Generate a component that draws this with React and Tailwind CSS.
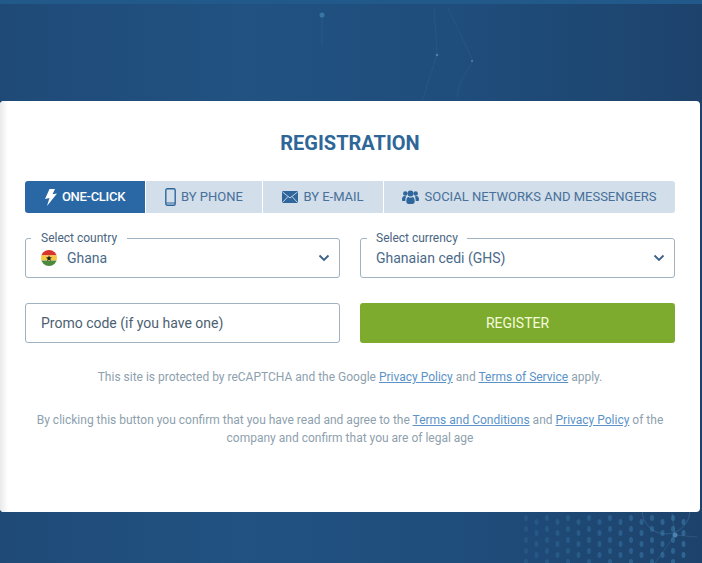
import React from 'react'

function Chevron() {
  return (
    <svg width="12" height="8" viewBox="0 0 12 8" fill="none" className="absolute right-[9px] top-[15px]">
      <path d="M1.5 1.5 6 6l4.5-4.5" stroke="#3a6288" strokeWidth="1.8" />
    </svg>
  )
}

function Bolt() {
  return (
    <svg width="12" height="17" viewBox="0 0 12 17" fill="#fff">
      <path d="M4.500 0H10L7.500 5.200 12 4.500 2 17l2.500-8L0 10z" />
    </svg>
  )
}

function Phone() {
  return (
    <svg width="11" height="18" viewBox="0 0 11 18" fill="none">
      <rect x="0.8" y="0.8" width="9.400" height="16.400" rx="1.500" stroke="#2f679c" strokeWidth="1.400" />
      <path d="M1 15h9" stroke="#2f679c" strokeWidth="1" />
    </svg>
  )
}

function Mail() {
  return (
    <svg width="16" height="12" viewBox="0 0 16 12">
      <rect width="16" height="12" rx="1" fill="#2f679c" />
      <path d="M0.500 1 8 7l7.500-6M0.500 11.500 6 5.500M15.500 11.500 10 5.500" fill="none" stroke="#d2dee9" strokeWidth="0.900" />
    </svg>
  )
}

function Users() {
  return (
    <svg width="17" height="14" viewBox="0 0 17 14" fill="#2f679c">
      <circle cx="3.300" cy="3.500" r="2.200" />
      <circle cx="13.700" cy="3.500" r="2.200" />
      <circle cx="8.500" cy="3.600" r="3" />
      <path d="M0 10c0-3 1-4 2.500-4 .7 0 1.200.4 1.800.6-.7 1-1 2.400-1 4.400H1.200C.500 11 0 10.700 0 10zM17 10c0-3-1-4-2.500-4-.7 0-1.200.4-1.800.6.700 1 1 2.400 1 4.400h2.100c.7 0 1.200-.3 1.200-1z" />
      <path d="M4.300 11.500c0-3.500 1.200-4.500 2.200-4.500.6.500 1.200.8 2 .8s1.400-.3 2-.8c1 0 2.200 1 2.200 4.500 0 1.500-1 2.500-2.300 2.500H6.600c-1.300 0-2.300-1-2.300-2.500z" />
    </svg>
  )
}

function GhanaFlag() {
  return (
    <svg width="16" height="16" viewBox="0 0 16 16" className="rounded-full">
      <rect width="16" height="5.400" fill="#d8342b" />
      <rect y="5.400" width="16" height="5.200" fill="#f5c842" />
      <rect y="10.600" width="16" height="5.400" fill="#4b8a3c" />
      <path d="M8 5.200l.8 2.100 2.200.1-1.700 1.400.6 2.100L8 9.800 6.100 11l.6-2.100L5 7.400l2.200-.1z" fill="#222" />
    </svg>
  )
}

function Background() {
  const dots = []
  for (let c = 0; c < 16; c++) {
    for (let r = 0; r < 5; r++) {
      dots.push(<ellipse key={c + '-' + r} cx={526 + c * 10.5} cy={518 + r * 11 + (c % 2) * 4} rx="2" ry="3" fill="#3f80b3" opacity={0.22 + (c / 16) * 0.35} />)
    }
  }
  return (
    <svg width="702" height="563" viewBox="0 0 702 563" fill="none" className="absolute inset-0">
      <circle cx="322" cy="15" r="2.500" fill="#3f7fb0" opacity="0.8" />
      <circle cx="437" cy="55" r="1.300" fill="#5f97c0" opacity="0.7" />
      <circle cx="472" cy="61" r="1" fill="#6a9dc2" opacity="0.7" />
      <path d="M448 8l25 53-13 22-3 14M437 55l-15 46M434 8l3 47M322 15v30" stroke="#4b7ea8" strokeWidth="0.500" opacity="0.35" />
      {dots}
      <circle cx="666" cy="510" r="24" stroke="#4f8dbd" strokeWidth="0.800" opacity="0.45" />
      <path d="M655 563l20-28 22 2M675 535l-3-22" stroke="#5f97c0" strokeWidth="0.500" opacity="0.45" />
      <circle cx="675" cy="535" r="2.500" fill="#5f9ac6" opacity="0.7" />
    </svg>
  )
}

export default function App() {
  const tabClass = 'flex items-center justify-center gap-[5px] bg-[#d2dee9] text-[#47709a]'
  const linkClass = 'underline text-[#5b93c9]'
  return (
    <div className="relative w-[702px] h-[563px] overflow-hidden bg-[linear-gradient(90deg,#1f4a78_0%,#215281_35%,#1f4d7c_65%,#1d436c_100%)] font-['Roboto',sans-serif]">
      <Background />
      <div className="relative h-1 bg-[#22598b]"></div>
      <div className="relative mt-[97px] w-[700px] h-[411px] bg-white rounded-[4px] px-[25px] pt-[30px]">
        <div className="absolute left-0 top-0 bottom-0 w-[8px] rounded-l-[4px] bg-[linear-gradient(90deg,#e9e9e9,#ffffff)]"></div>
        <h1 className="relative text-center text-[20px] leading-6 font-bold text-[#2f6698]">REGISTRATION</h1>

        <div className="relative mt-[26px] flex h-8 text-[13px] gap-px">
          <div className="flex items-center justify-center gap-[5px] w-[120px] bg-[#2968a5] text-white font-medium tracking-[-0.3px] rounded-l-[3px]">
            <Bolt />
            <span>ONE-CLICK</span>
          </div>
          <div className={tabClass + ' w-[116px]'}>
            <Phone />
            <span>BY PHONE</span>
          </div>
          <div className={tabClass + ' w-[120px]'}>
            <Mail />
            <span>BY E-MAIL</span>
          </div>
          <div className={tabClass + ' flex-1 rounded-r-[3px]'}>
            <Users />
            <span>SOCIAL NETWORKS AND MESSENGERS</span>
          </div>
        </div>

        <div className="relative mt-[25px] grid grid-cols-2 gap-x-5 gap-y-[25px]">
          <div className="relative h-10 border border-[#9fb2c2] rounded-[3px]">
            <span className="absolute left-[5px] -top-[8px] bg-white px-[10px] text-[12px] leading-[14px] text-[#4a6580]">Select country</span>
            <div className="flex items-center gap-[10px] pl-[15px] pt-[10px] text-[14px] leading-[18px] text-[#4a6a8a]">
              <GhanaFlag />
              <span>Ghana</span>
            </div>
            <Chevron />
          </div>
          <div className="relative h-10 border border-[#9fb2c2] rounded-[3px]">
            <span className="absolute left-[6px] -top-[8px] bg-white px-[9px] text-[12px] leading-[14px] text-[#4a6580]">Select currency</span>
            <div className="pl-[15px] pt-[10px] text-[14px] leading-[18px] text-[#4a6a8a]">Ghanaian cedi (GHS)</div>
            <Chevron />
          </div>

          <div className="h-10 flex items-center pl-[15px] border border-[#9fb2c2] rounded-[3px] text-[14px] text-[#4d5f72]">Promo code (if you have one)</div>
          <button className="h-10 bg-[#7dab2e] rounded-[3px] text-[14px] text-[#f4fbdc]">REGISTER</button>
        </div>

        <p className="relative mt-[25px] text-center text-[12px] leading-[18px] text-[#8e9fae]">
          This site is protected by reCAPTCHA and the Google <a className={linkClass}>Privacy Policy</a> and <a className={linkClass}>Terms of Service</a> apply.
        </p>
        <p className="relative mt-[25px] text-center text-[12px] leading-[18px] text-[#8e9fae]">
          By clicking this button you confirm that you have read and agree to the <a className={linkClass}>Terms and Conditions</a> and <a className={linkClass}>Privacy Policy</a> of the
          <br />
          company and confirm that you are of legal age
        </p>
      </div>
    </div>
  )
}
